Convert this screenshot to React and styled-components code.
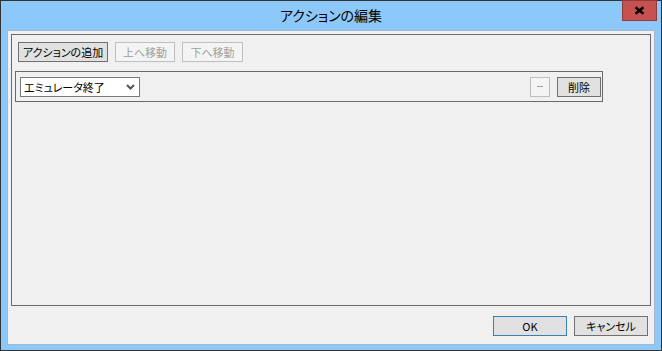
import styled, { createGlobalStyle } from "styled-components"

const GlobalStyle = createGlobalStyle`
  html, body {
    margin: 0;
    padding: 0;
    background: #8dc8fa;
  }
  * {
    box-sizing: border-box;
  }
`

const Window = styled.div`
  width: 662px;
  height: 351px;
  border: 1px solid #333333;
  background-color: #8dc8fa;
  display: flex;
  flex-direction: column;
  font-family: "Noto Sans CJK JP", "Liberation Sans", sans-serif;
  font-feature-settings: "palt";
  color: #000;
`

const TitleBar = styled.div`
  height: 29px;
  display: flex;
  align-items: flex-start;
`

const TitleSpacer = styled.div`
  width: 39px;
  flex-shrink: 0;
`

const Title = styled.div`
  flex: 1;
  text-align: center;
  padding-top: 5px;
  font-size: 14px;
  line-height: 18px;
  color: #000;
`

const CloseButton = styled.div`
  flex-shrink: 0;
  width: 35px;
  height: 21px;
  margin-right: 4px;
  margin-top: -1px;
  background: #c75050;
  border: 1px solid #8f3b3b;
  display: flex;
  align-items: center;
  justify-content: center;
`

const Client = styled.div`
  flex: 1;
  margin: 0 6px 5px 6px;
  border: 1px solid #a2bad0;
  background-color: #f0f0f0;
  padding: 3px;
  display: flex;
  flex-direction: column;
`

const Panel = styled.div`
  height: 272px;
  border: 1px solid #6a6a6a;
  padding: 7px 3px;
  display: flex;
  flex-direction: column;
`

const Toolbar = styled.div`
  display: flex;
  gap: 7px;
  padding-left: 3px;
`

const Button = styled.div`
  width: ${(p) => p.$w}px;
  height: 20px;
  display: flex;
  align-items: center;
  justify-content: center;
  font-size: 11px;
  line-height: 14px;
  background-color: ${(p) => (p.$disabled ? "#f4f4f4" : "#e1e1e1")};
  border: 1px solid
    ${(p) => (p.$disabled ? "#bfbfbf" : p.$default ? "#3c7fb1" : "#707070")};
  color: ${(p) => (p.$disabled ? "#a0a0a0" : "#000")};
  white-space: nowrap;
`

const ActionRow = styled.div`
  width: 588px;
  height: 31px;
  margin-top: 9px;
  border: 1px solid #6a6a6a;
  padding: 0 1px 0 4px;
  display: flex;
  align-items: center;
  gap: 7px;
`

const Select = styled.div`
  width: 120px;
  height: 20px;
  margin-top: 1px;
  background-color: #fff;
  border: 1px solid #7a7a7a;
  display: flex;
  align-items: center;
  justify-content: space-between;
  padding: 0 4px 0 3px;
  font-size: 11px;
  margin-right: auto;
`

const Footer = styled.div`
  display: flex;
  justify-content: flex-end;
  gap: 7px;
  padding: 10px 3px 0 0;
`

const Minus = styled.span`
  display: block;
  width: 6px;
  height: 1px;
  background-color: #a0a0a0;
`

export default function App() {
  return (
    <>
      <GlobalStyle />
      <Window>
        <TitleBar>
          <TitleSpacer />
          <Title>アクションの編集</Title>
          <CloseButton>
            <svg width="11" height="9" viewBox="0 0 11 9">
              <path
                d="M1.5 1.2 L9.5 7.8 M9.5 1.2 L1.5 7.8"
                stroke="#000"
                strokeWidth="2.4"
                fill="none"
              />
            </svg>
          </CloseButton>
        </TitleBar>
        <Client>
          <Panel>
            <Toolbar>
              <Button $w={90}>アクションの追加</Button>
              <Button $w={60} $disabled>
                上へ移動
              </Button>
              <Button $w={61} $disabled>
                下へ移動
              </Button>
            </Toolbar>
            <ActionRow>
              <Select>
                <span>エミュレータ終了</span>
                <svg width="9" height="6" viewBox="0 0 9 6">
                  <path
                    d="M1 1 L4.5 4.5 L8 1"
                    stroke="#555"
                    strokeWidth="2"
                    fill="none"
                  />
                </svg>
              </Select>
              <Button $w={20} $disabled>
                <Minus />
              </Button>
              <Button $w={44}>削除</Button>
            </ActionRow>
          </Panel>
          <Footer>
            <Button $w={74} $default>
              OK
            </Button>
            <Button $w={74}>キャンセル</Button>
          </Footer>
        </Client>
      </Window>
    </>
  )
}
